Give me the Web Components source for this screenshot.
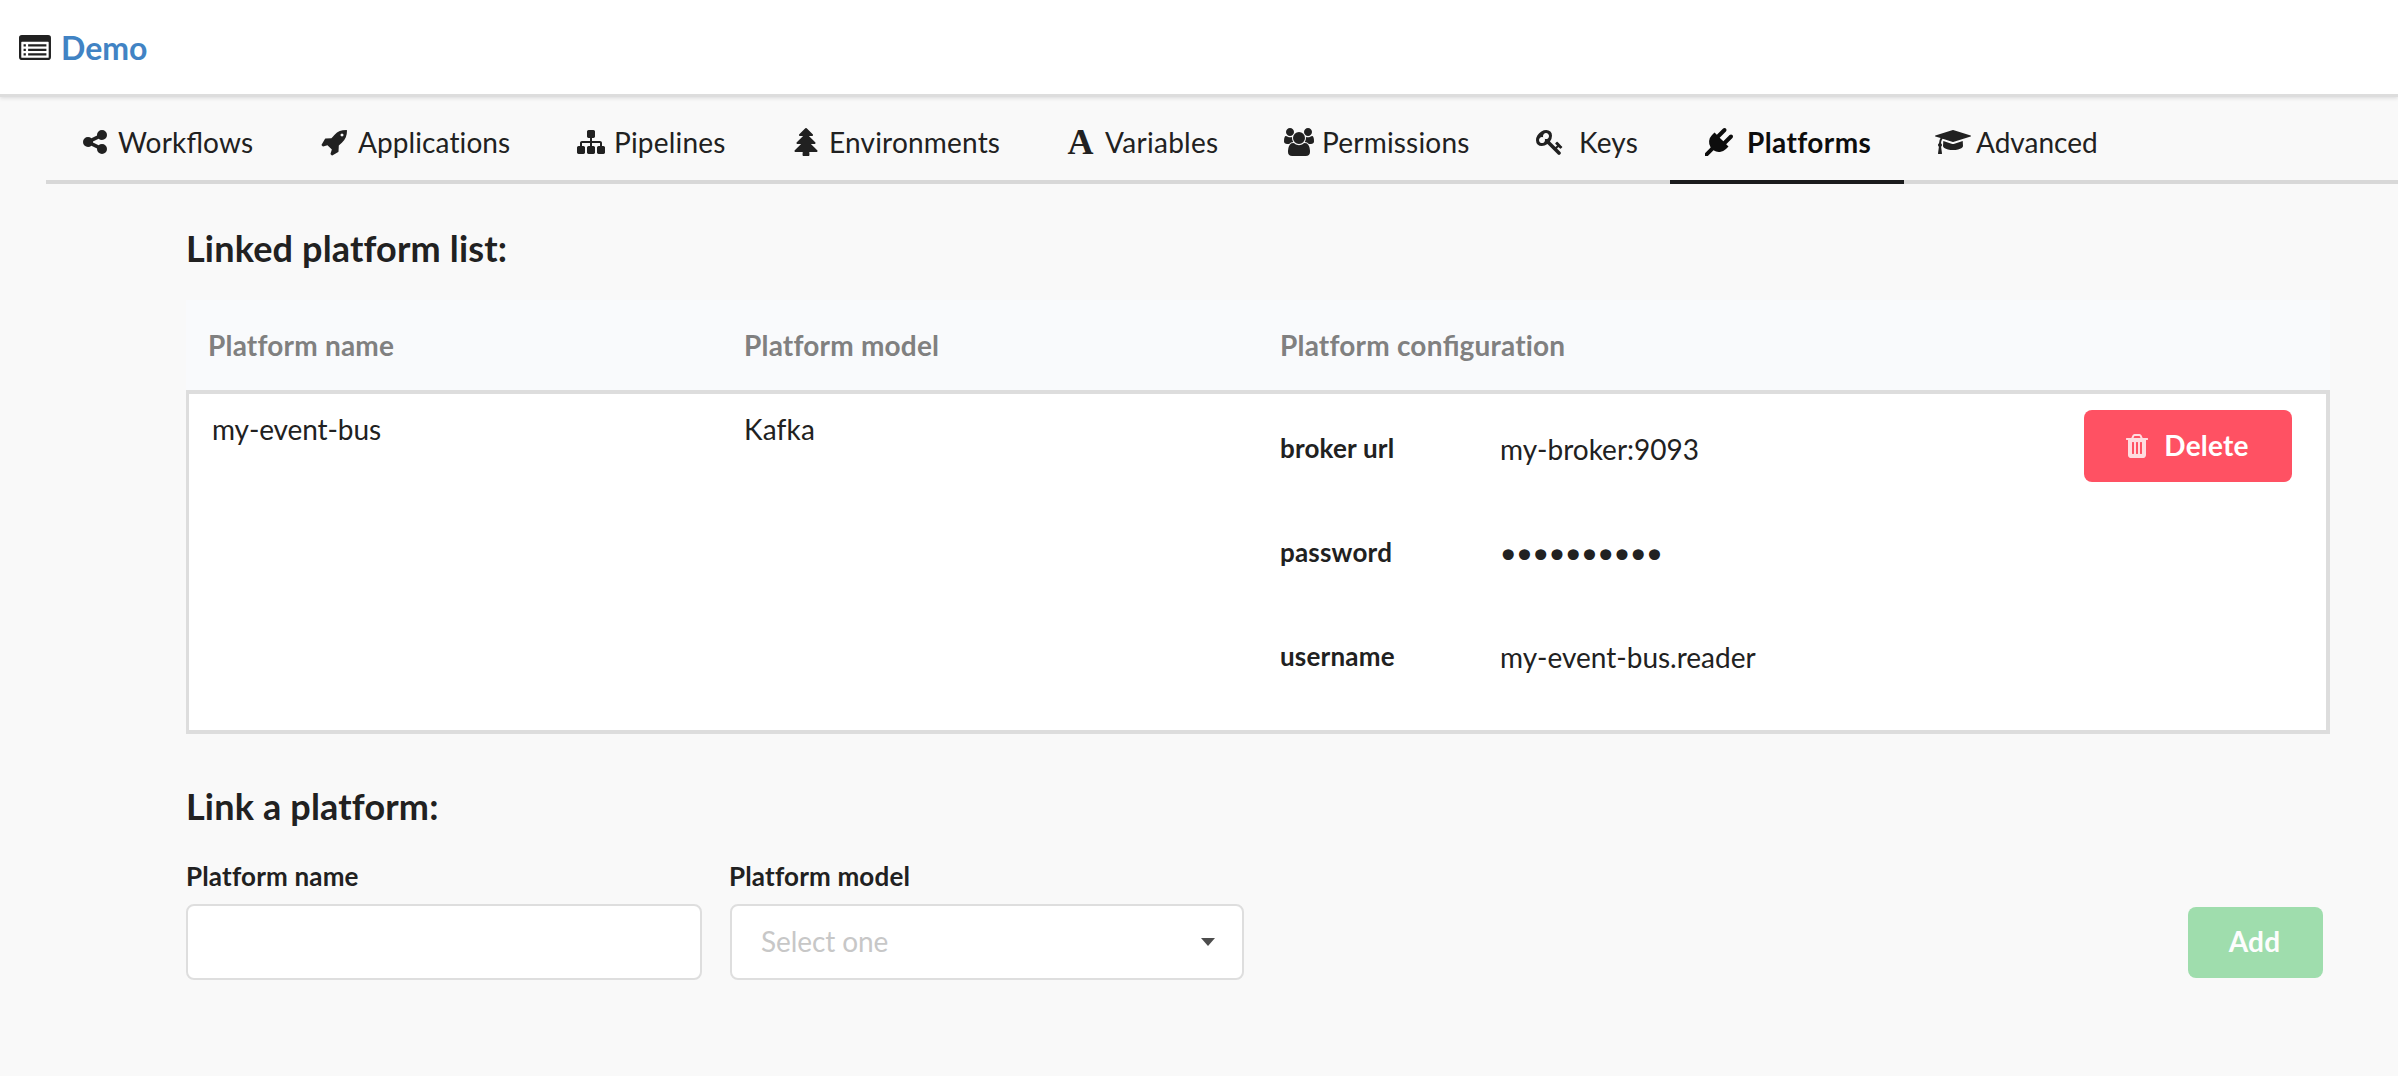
<!DOCTYPE html>
<html lang="en">
<head>
<meta charset="utf-8">
<title>Demo</title>
<style>
html, body { margin: 0; height: 100%; background: #f9f9f9; }
body { font: 28px/36px Lato, "Liberation Sans", sans-serif; color: #212121; overflow: hidden; font-variant-ligatures: none; }
</style>
</head>
<body>
<project-page></project-page>
<script>
const ICONS = {
  list: ['0 128 1792 1408', '<path fill-rule="evenodd" d="M160 128H1632a160 160 0 0 1 160 160V1376a160 160 0 0 1-160 160H160a160 160 0 0 1-160-160V288a160 160 0 0 1 160-160zM160 512a32 32 0 0 0-32 32V1376a32 32 0 0 0 32 32H1632a32 32 0 0 0 32-32V544a32 32 0 0 0-32-32z"/><path d="M256 640h128v128H256zM256 896h128v128H256zM256 1152h128v128H256zM512 640h1024v128H512zM512 896h1024v128H512zM512 1152h1024v128H512z"/>'],
  share: ['0 0 1792 1792', '<path d="M1344 1024q133 0 226.500 93.500t93.500 226.500-93.500 226.500-226.500 93.500-226.500-93.500-93.500-226.500q0-12 2-34l-360-180q-92 86-218 86-133 0-226.500-93.500t-93.500-226.500 93.500-226.500 226.500-93.500q126 0 218 86l360-180q-2-22-2-34 0-133 93.500-226.500t226.500-93.500 226.500 93.500 93.500 226.500-93.500 226.500-226.500 93.500q-126 0-218-86l-360 180q2 22 2 34t-2 34l360 180q92-86 218-86z"/>'],
  rocket: ['0 0 1792 1792', '<path d="M1440 448q0-40-28-68t-68-28-68 28-28 68 28 68 68 28 68-28 28-68zm224-288q0 249-75.500 430.500t-253.500 360.500q-81 80-195 176l-20 379q-2 16-16 26l-384 224q-7 4-16 4-12 0-23-9l-64-64q-13-14-8-32l85-276-281-281-276 85q-3 1-9 1-14 0-23-9l-64-64q-17-19-5-39l224-384q10-14 26-16l379-20q96-114 176-195 188-187 358-258t431-71q14 0 24 9.500t10 22.500z"/>'],
  sitemap: ['0 0 1792 1792', '<path d="M1792 1248v320q0 40-28 68t-68 28h-320q-40 0-68-28t-28-68v-320q0-40 28-68t68-28h96v-192h-512v192h96q40 0 68 28t28 68v320q0 40-28 68t-68 28h-320q-40 0-68-28t-28-68v-320q0-40 28-68t68-28h96v-192h-512v192h96q40 0 68 28t28 68v320q0 40-28 68t-68 28h-320q-40 0-68-28t-28-68v-320q0-40 28-68t68-28h96v-192q0-52 38-90t90-38h512v-192h-96q-40 0-68-28t-28-68v-320q0-40 28-68t68-28h320q40 0 68 28t28 68v320q0 40-28 68t-68 28h-96v192h512q52 0 90 38t38 90v192h96q40 0 68 28t28 68z"/>'],
  tree: ['0 0 1792 1792', '<path d="M1632 1472q0 26-19 45t-45 19h-462q1 17 6 87.500t5 108.500q0 25-18 42.500t-43 17.500h-320q-25 0-43-17.500t-18-42.500q0-38 5-108.500t6-87.500h-462q-26 0-45-19t-19-45 19-45l402-403h-229q-26 0-45-19t-19-45 19-45l402-403h-197q-26 0-45-19t-19-45 19-45l384-384q19-19 45-19t45 19l384 384q19 19 19 45t-19 45-45 19h-197l402 403q19 19 19 45t-19 45-45 19h-229l402 403q19 19 19 45z"/>'],
  users: ['0 0 1920 1792', '<path d="M593 896q-162 5-265 128h-134q-82 0-138-40.500t-56-118.500q0-353 124-353 6 0 43.500 21t97.500 42.500 119 21.500q67 0 133-23-5 37-5 66 0 139 81 256zm1071 637q0 120-73 189.500t-194 69.500h-874q-121 0-194-69.500t-73-189.500q0-53 3.500-103.500t14-109 26.500-108.500 43-97.500 62-81 85.500-53.500 111.500-20q10 0 43 21.500t73 48 107 48 135 21.500 135-21.500 107-48 73-48 43-21.500q61 0 111.500 20t85.500 53.500 62 81 43 97.500 26.500 108.500 14 109 3.500 103.500zm-1024-1277q0 106-75 181t-181 75-181-75-75-181 75-181 181-75 181 75 75 181zm704 384q0 159-112.500 271.500t-271.500 112.500-271.500-112.500-112.500-271.500 112.500-271.500 271.500-112.500 271.500 112.500 112.500 271.500zm576 225q0 78-56 118.500t-138 40.500h-134q-103-123-265-128 81-117 81-256 0-29-5-66 66 23 133 23 59 0 119-21.500t97.500-42.500 43.500-21q124 0 124 353zm-128-609q0 106-75 181t-181 75-181-75-75-181 75-181 181-75 181 75 75 181z"/>'],
  key: ['0 0 1792 1792', '<path d="M832 512q0-80-56-136t-136-56-136 56-56 136q0 42 19 83-41-19-83-19-80 0-136 56t-56 136 56 136 136 56 136-56 56-136q0-42-19-83 41 19 83 19 80 0 136-56t56-136zm851 704q0 17-49 66t-66 49q-9 0-28.500-16t-36.500-33-38.500-40-24.500-26l-96 96 220 220q28 28 28 68 0 42-39 81t-81 39q-40 0-68-28l-671-671q-176 131-365 131-163 0-265.500-102.500t-102.500-265.500q0-160 95-313t248-248 313-95q163 0 265.500 102.500t102.500 265.500q0 189-131 365l355 355 96-96q-3-3-26-24.500t-40-38.500-33-36.500-16-28.500q0-17 49-66t66-49q13 0 23 10 6 6 46 44.500t82 79.500 86.500 86 73 78 28.500 41z"/>'],
  plug: ['0 0 1792 1792', '<path d="M1755 453q37 38 37 90.500t-37 90.500l-401 400 150 150-160 160q-163 163-389.500 186.500t-411.500-100.500l-362 362h-181v-181l362-362q-124-185-100.500-411.500t186.500-389.500l160-160 150 150 400-401q38-37 91-37t90 37 37 90.500-37 90.500l-400 401 234 234 401-400q38-37 91-37t90 37z"/>'],
  cap: ['0 0 2304 1792', '<path d="M1774 836l18 316q4 69-82 128t-235 93.500-323 34.500-323-34.500-235-93.500-82-128l18-316 574 181q22 7 48 7t48-7zm530-324q0 23-22 31l-1120 352q-4 1-10 1t-10-1l-652-206q-43 34-71 111.500t-34 178.500q63 36 63 109 0 69-58 107l58 433q2 14-8 25-9 11-24 11h-192q-15 0-24-11-10-11-8-25l58-433q-58-38-58-107 0-73 65-111 11-207 98-330l-333-104q-22-8-22-31t22-31l1120-352q4-1 10-1t10 1l1120 352q22 8 22 31z"/>'],
  trash: ['0 0 1792 1792', '<path fill-rule="evenodd" d="M704 1376v-704q0-14-9-23t-23-9h-64q-14 0-23 9t-9 23v704q0 14 9 23t23 9h64q14 0 23-9t9-23zm256 0v-704q0-14-9-23t-23-9h-64q-14 0-23 9t-9 23v704q0 14 9 23t23 9h64q14 0 23-9t9-23zm256 0v-704q0-14-9-23t-23-9h-64q-14 0-23 9t-9 23v704q0 14 9 23t23 9h64q14 0 23-9t9-23zm-544-992h448l-48-117q-7-9-17-11h-317q-10 2-17 11zm928 32v64q0 14-9 23t-23 9h-96v948q0 83-47 143.500t-113 60.500h-832q-66 0-113-58.500t-47-141.500v-952h-96q-14 0-23-9t-9-23v-64q0-14 9-23t23-9h309l70-167q15-37 54-63t79-26h320q40 0 79 26t54 63l70 167h309q14 0 23 9t9 23z"/>']
};

function define(name, html, setup) {
  const tpl = document.createElement('template');
  tpl.innerHTML = html;
  customElements.define(name, class extends HTMLElement {
    connectedCallback() {
      if (this.shadowRoot) return;
      this.attachShadow({ mode: 'open' }).append(tpl.content.cloneNode(true));
      if (setup) setup(this, this.shadowRoot);
    }
  });
}

define('ui-icon', `<style>
:host { display: flex; justify-content: center; align-items: center; flex: none; width: 33px; height: 28px; }
svg { display: block; flex: none; height: var(--icon-size, 28px); fill: currentColor; }
span { font: bold 36px/28px "Liberation Serif", serif; letter-spacing: 0; margin-right: 2px; }
</style>`, (el, root) => {
  const name = el.getAttribute('name');
  if (name === 'font') {
    const s = document.createElement('span');
    s.textContent = 'A';
    root.append(s);
    return;
  }
  const [box, body] = ICONS[name];
  const t = document.createElement('template');
  t.innerHTML = '<svg viewBox="' + box + '">' + body + '</svg>';
  root.append(t.content);
});

define('page-header', `<style>
:host { display: flex; align-items: center; gap: 10px; height: 94px; padding-left: 19px; background: #fff; border-bottom: 3px solid #ddd; box-shadow: 0 1px 4px rgba(34,36,38,.15); }
ui-icon { --icon-size: 25.14px; width: 32px; margin-top: 1px; }
a { font-size: 32px; font-weight: 700; color: #4183c4; line-height: 40px; padding-top: 1px; }
</style><ui-icon name="list"></ui-icon><a><slot></slot></a>`);

define('tab-item', `<style>
:host { display: flex; align-items: center; box-sizing: border-box; height: 87px; padding: 6px 0 0 32px; flex: none; border-bottom: 4px solid #d8d8d8; white-space: nowrap; letter-spacing: .2px; }
:host([active]) { border-color: #1b1c1d; color: #0d0d0d; font-weight: 700; letter-spacing: .4px; }
.label { margin-left: var(--gap, 7px); }
</style><span class="label"><slot></slot></span>`, (el, root) => {
  el.style.width = el.getAttribute('width') + 'px';
  el.style.setProperty('--gap', el.getAttribute('gap') + 'px');
  const icon = document.createElement('ui-icon');
  icon.setAttribute('name', el.getAttribute('icon'));
  root.querySelector('.label').before(icon);
});

define('tab-bar', `<style>
:host { display: flex; margin-left: 46px; }
.rest { flex: 1; border-bottom: 4px solid #d8d8d8; }
</style><slot></slot><div class="rest"></div>`);

define('ui-button', `<style>
:host { display: flex; align-items: center; justify-content: center; box-sizing: border-box; height: 72px; border-radius: 8px; background: #ff5163; color: #fff; font-weight: 700; flex: none; letter-spacing: .2px; }
:host([kind=add]) { background: #9fddad; height: 71px; width: 135px; padding-right: 2px; color: #fdfdfd; }
:host([kind=delete]) { width: 208px; gap: 11px; padding-right: 7px; }
.text { padding-bottom: 2px; }
:host([kind=add]) .text { padding-bottom: 3px; }
::slotted(ui-icon) { opacity: .8; }
</style><slot name="icon"></slot><span class="text"><slot></slot></span>`);

define('config-row', `<style>
:host { display: flex; height: 104px; }
b { width: 220px; font-size: 26px; padding-top: 36px; line-height: 36px; letter-spacing: .2px; }
.value { padding-top: 37px; line-height: 36px; }
</style><b><slot name="key"></slot></b><span class="value"><slot></slot></span>`);

define('platform-table', `<style>
:host { display: block; width: 2144px; margin-left: 186px; }
.head { display: flex; height: 90px; align-items: center; background: #f9fafc; color: #808080; font-weight: 700; letter-spacing: .2px; }
.head div { width: 536px; box-sizing: border-box; padding-left: 22px; }
.lig { font-variant-ligatures: common-ligatures; letter-spacing: 0; }
.row { display: flex; box-sizing: border-box; height: 344px; background: #fff; border: 4px solid #ddd; border-left-width: 3px; }
.name { width: 533px; box-sizing: border-box; padding: 17px 0 0 23px; letter-spacing: -.1px; }
.model { width: 536px; box-sizing: border-box; padding: 17px 0 0 22px; letter-spacing: .2px; }
.conf { flex: 1; padding-left: 22px; }
.act { padding: 16px 34px 0 0; }
.dots { font-family: "DejaVu Sans", sans-serif; font-size: 38px; line-height: 0; letter-spacing: -6.16px; margin-left: -3px; vertical-align: -5px; }
</style>
<div class="head"><div>Platform name</div><div>Platform model</div><div>Platform con<span class="lig">fi</span>guration</div></div>
<div class="row"><div class="name">my-event-bus</div><div class="model">Kafka</div>
<div class="conf">
<config-row><span slot="key">broker url</span>my-broker:9093</config-row>
<config-row><span slot="key">password</span><span class="dots">••••••••••</span></config-row>
<config-row><span slot="key">username</span>my-event-bus.reader</config-row>
</div>
<div class="act"><ui-button kind="delete"><ui-icon slot="icon" name="trash"></ui-icon>Delete</ui-button></div></div>`);

define('form-field', `<style>
:host { display: flex; flex-direction: column; gap: 10px; }
label { font-size: 26px; font-weight: 700; line-height: 36px; letter-spacing: .17px; }
:host([select]) label { margin-left: -1px; }
.box { display: flex; align-items: center; justify-content: space-between; box-sizing: border-box; height: 76px; border: 2px solid #dedede; border-radius: 8px; background: #fff; padding: 0 27px 0 29px; color: #c7c7c7; }
.value { padding-bottom: 2px; letter-spacing: -.1px; }
svg { fill: #4d4d4d; display: block; }
:host(:not([select])) svg { display: none; }
</style><label><slot name="label"></slot></label><div class="box"><span class="value"><slot></slot></span><svg width="14" height="8"><path d="M0 0H14L7 8z"/></svg></div>`);

define('section-title', `<style>
:host { display: block; margin-left: 186px; font-size: 36px; font-weight: 700; line-height: 44px; letter-spacing: .17px; }
</style><slot></slot>`);

define('project-page', `<style>
:host { display: block; }
.t1 { margin-top: 42px; margin-bottom: 30px; }
.t2 { margin-top: 50px; margin-bottom: 30px; }
.lig { font-variant-ligatures: common-ligatures; letter-spacing: 0; }
form { display: flex; margin: 0 75px 0 186px; align-items: flex-end; }
form-field { width: 516px; margin-right: 28px; }
form-field[select] { width: 514px; margin-right: 0; }
ui-button { margin-left: auto; margin-bottom: 2px; }
</style>
<page-header>Demo</page-header>
<tab-bar>
<tab-item icon="share" width="240" gap="7">Work<span class="lig">fl</span>ows</tab-item>
<tab-item icon="rocket" width="256" gap="7" style="letter-spacing:.1px">Applications</tab-item>
<tab-item icon="sitemap" width="215" gap="7">Pipelines</tab-item>
<tab-item icon="tree" width="276" gap="7">Environments</tab-item>
<tab-item icon="font" width="217" gap="7" style="letter-spacing:.3px">Variables</tab-item>
<tab-item icon="users" width="251" gap="7">Permissions</tab-item>
<tab-item icon="key" width="169" gap="13">Keys</tab-item>
<tab-item icon="plug" width="234" gap="12" active>Platforms</tab-item>
<tab-item icon="cap" width="226" gap="7" style="letter-spacing:0">Advanced</tab-item>
</tab-bar>
<section-title class="t1">Linked platform list:</section-title>
<platform-table></platform-table>
<section-title class="t2">Link a platform:</section-title>
<form><form-field><span slot="label">Platform name</span></form-field>
<form-field select><span slot="label">Platform model</span>Select one</form-field>
<ui-button kind="add">Add</ui-button></form>`);
</script>
</body>
</html>
